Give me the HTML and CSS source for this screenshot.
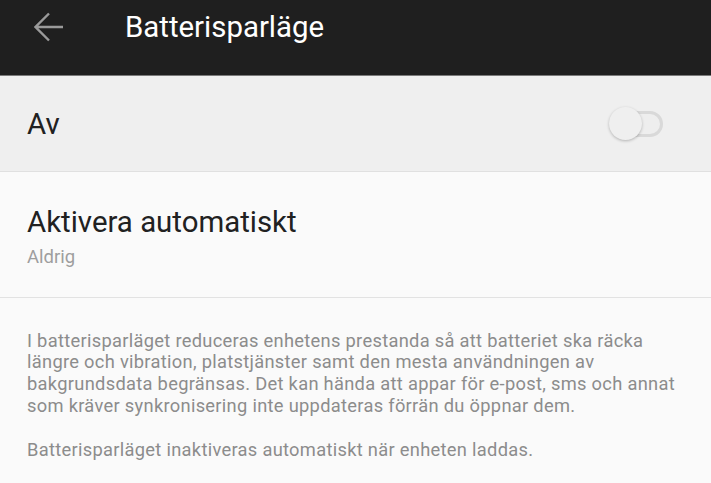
FILE: index.html
```html
<!DOCTYPE html>
<html lang="sv">
<head>
<meta charset="utf-8">
<link rel="stylesheet" href="styles.css">
</head>
<body>
<div class="screen">
  <header class="appbar">
    <svg class="back" width="30" height="30" viewBox="0 0 30 30" aria-hidden="true">
      <path d="M29 15H2.5M15 1.5L1.5 15L15 28.5" fill="none" stroke="#9a9a9a" stroke-width="2.4" stroke-linecap="butt" stroke-linejoin="miter"/>
    </svg>
    <h1 class="title">Batterisparläge</h1>
  </header>
  <div class="toggle-row">
    <span class="toggle-label">Av</span>
    <span class="switch"><span class="track"></span><span class="thumb"></span></span>
  </div>
  <div class="setting">
    <div class="setting-title">Aktivera automatiskt</div>
    <div class="setting-sub">Aldrig</div>
  </div>
  <div class="desc">
    <p>I batterisparläget reduceras enhetens prestanda så att batteriet ska räcka längre och vibration, platstjänster samt den mesta användningen av bakgrundsdata begränsas. Det kan hända att appar för e-post, sms och annat som kräver synkronisering inte uppdateras förrän du öppnar dem.</p>
    <p>Batterisparläget inaktiveras automatiskt när enheten laddas.</p>
  </div>
</div>
</body>
</html>
```
FILE: styles.css
```css
html, body {
  margin: 0;
  padding: 0;
  background: #fafafa;
}
.screen {
  width: 711px;
  height: 483px;
  overflow: hidden;
  font-family: Roboto, "Noto Sans", sans-serif;
  background: #fafafa;
}
.appbar {
  height: 75px;
  background: #1f1f1f;
  border-bottom: 1px solid #7a7a7a;
  display: flex;
  align-items: flex-start;
}
.back {
  margin: 12px 0 0 34px;
  flex: none;
}
.title {
  margin: 9px 0 0 61px;
  font-size: 29.4px;
  font-weight: 400;
  line-height: 36px;
  color: #ffffff;
}
.toggle-row {
  height: 95px;
  background: #efefef;
  border-bottom: 1px solid #e0e0e0;
  display: flex;
  align-items: center;
  justify-content: space-between;
  padding: 0 48px 0 27px;
}
.toggle-label {
  font-size: 29.4px;
  color: #212121;
}
.switch {
  position: relative;
  width: 54px;
  height: 34px;
}
.track {
  position: absolute;
  right: 0;
  top: 4px;
  width: 44px;
  height: 20px;
  border: 3px solid #d9d9d9;
  border-radius: 13px;
  background: #eeeeee;
}
.thumb {
  position: absolute;
  left: 0;
  top: 0;
  width: 33px;
  height: 33px;
  border-radius: 50%;
  background: #efefef;
  box-shadow: 0 1px 3px rgba(0,0,0,0.25);
}
.setting {
  height: 126px;
  box-sizing: border-box;
  border-bottom: 1px solid #e2e2e2;
  padding: 32px 27px 0;
}
.setting-title {
  font-size: 29.4px;
  line-height: 36px;
  color: #212121;
}
.setting-sub {
  margin-top: 6px;
  font-size: 18.5px;
  line-height: 22px;
  color: #9e9e9e;
}
.desc {
  padding: 31.5px 27px 0;
  font-size: 18.3px;
  letter-spacing: 0.3px;
  line-height: 21.9px;
  color: #8c8c8c;
}
.desc p {
  margin: 0 0 22px;
}
```
